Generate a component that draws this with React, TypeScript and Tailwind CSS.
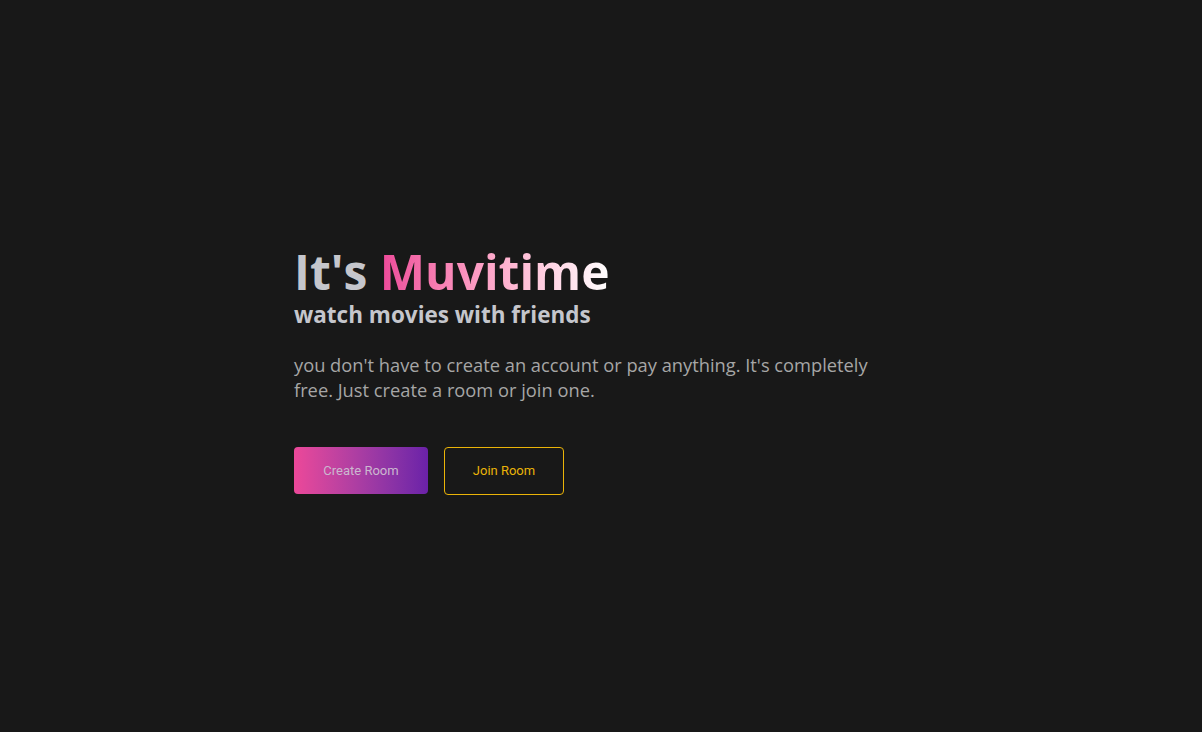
import React from 'react'

const App: React.FC = () => {
  return (
    <div className="w-full h-screen bg-[#181818] flex items-center" style={{ fontFamily: '"Open Sans", "Noto Sans", sans-serif' }}>
      <div className="mx-auto w-[614px] mt-[4px] pt-[3px]">
        {/* Title */}
        <h1 className="text-[48px] leading-[56px] font-bold text-[#c5c6cc] tracking-[0px]">
          It's{' '}
          <span className="bg-gradient-to-r from-[#ec4899] to-white bg-clip-text text-transparent">Muvitime</span>
        </h1>
        <h2 className="text-[22.5px] leading-[28px] font-bold text-[#c5c6cc] mt-[1px]">watch movies with friends</h2>

        {/* Description */}
        <p className="mt-[23px] max-w-[590px] text-[18.3px] leading-[25px] text-[#a6a6a6]">
          you don't have to create an account or pay anything. It's completely free. Just create a room or join one.
        </p>

        {/* Actions */}
        <div className="mt-[45px] flex gap-4" style={{ fontFamily: 'Roboto, "Liberation Sans", sans-serif' }}>
          <button className="w-[134px] h-[47px] rounded-[4px] bg-gradient-to-r from-[#ec4899] to-[#6b21a8] text-[13px] text-[#cbb8cf]">
            Create Room
          </button>
          <button className="w-[120px] h-[48px] rounded-[4px] border border-[#eab308] text-[13px] text-[#eab308]">
            Join Room
          </button>
        </div>
      </div>
    </div>
  )
}

export default App
